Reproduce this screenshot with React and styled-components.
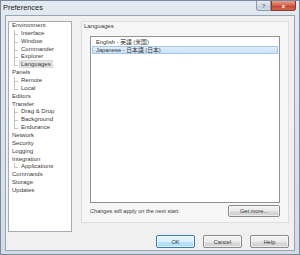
import React from 'react';
import styled, { createGlobalStyle } from 'styled-components';

const Global = createGlobalStyle`
  html, body { margin: 0; padding: 0; }
  body {
    width: 300px;
    height: 255px;
    overflow: hidden;
    background: #fff;
    font-family: "Liberation Sans", Arial, "Noto Sans CJK JP", sans-serif;
  }
`

const TREE = [
  { label: "Environment" },
  { label: "Interface", level: 1 },
  { label: "Window", level: 1 },
  { label: "Commander", level: 1 },
  { label: "Explorer", level: 1 },
  { label: "Languages", level: 1, last: true, selected: true },
  { label: "Panels" },
  { label: "Remote", level: 1 },
  { label: "Local", level: 1, last: true },
  { label: "Editors" },
  { label: "Transfer" },
  { label: "Drag & Drop", level: 1 },
  { label: "Background", level: 1 },
  { label: "Endurance", level: 1, last: true },
  { label: "Network" },
  { label: "Security" },
  { label: "Logging" },
  { label: "Integration" },
  { label: "Applications", level: 1, last: true },
  { label: "Commands" },
  { label: "Storage" },
  { label: "Updates" }
]

const LANGS = [
  { label: "English - 英語 (米国)" },
  { label: "Japanese - 日本語 (日本)", selected: true }
]

const Window = styled.div`
    width: 300px;
    height: 255px;
    box-sizing: border-box;
    border: 1px solid #7b8a9b;
    background: linear-gradient(#e3e9f0, #d3dce6);
    display: flex;
    flex-direction: column;
`

const TitleBar = styled.div`
    height: 14px;
    display: flex;
    align-items: flex-start;
    justify-content: space-between;
`

const Title = styled.div`
    font-size: 7.4px;
    color: #222;
    padding: 3px 0 0 2px;
    line-height: 8px;
`

const Caption = styled.div`
    display: flex;
    margin-right: 3px;
`

const CaptionButton = styled.div`
    width: ${p => p.$wide ? 25 : 15}px;
    height: 10px;
    box-sizing: border-box;
    display: flex;
    align-items: center;
    justify-content: center;
    font-size: 6px;
    font-weight: bold;
    color: ${p => p.$close ? '#fff' : '#6e7c8c'};
    border: 1px solid ${p => p.$close ? '#8c3a2b' : '#8d9aab'};
    border-top: none;
    border-radius: ${p => p.$close ? '0 0 3px 0' : '0 0 0 3px'};
    background: ${p => p.$close
      ? 'linear-gradient(#e4a08f, #d5604a 50%, #c5412a 51%, #d06a4f)'
      : 'linear-gradient(#e6ebf1, #d2dbe5 50%, #c2cedb 51%, #d4dde7)'};
`

const Client = styled.div`
    flex: 1;
    margin: 0 4px 3px 4px;
    border: 1px solid #97a5b5;
    background: #f0f0f0;
    display: flex;
    flex-direction: column;
    padding: 5px 5px 2px 2px;
    min-height: 0;
`

const Body = styled.div`
    display: flex;
    gap: 9px;
    align-items: flex-start;
`

const Tree = styled.div`
    width: 64px;
    height: 211px;
    box-sizing: border-box;
    border: 1px solid #a5acb5;
    background: #fff;
`

const TreeRow = styled.div`
    position: relative;
    height: 7.86px;
    line-height: 7.86px;
    font-size: 6px;
    color: #3a3a3a;
    padding-left: ${p => p.$level ? 11 : 2}px;
    white-space: nowrap;

    ${p => p.$level ? `
      &::before {
        content: "";
        position: absolute;
        left: 5px;
        top: 0;
        height: ${p.$last ? '50%' : '100%'};
        border-left: 1px solid #c4c4c4;
      }
      &::after {
        content: "";
        position: absolute;
        left: 5px;
        top: 50%;
        width: 4px;
        border-top: 1px solid #c4c4c4;
      }
    ` : ''}
`

const TreeLabel = styled.span`
    padding: 0 1px;
    background: ${p => p.$selected ? '#e4e4e4' : 'transparent'};
    outline: ${p => p.$selected ? '1px solid #dadada' : 'none'};
`

const Page = styled.div`
    width: 208px;
    height: 202px;
    box-sizing: border-box;
    border: 1px solid #dedede;
    background: #f6f6f6;
    display: flex;
    flex-direction: column;
    padding: 1px 8px 5px 2px;
`

const Heading = styled.div`
    font-size: 6px;
    line-height: 7px;
    color: #3a3a3a;
    height: 7px;
`

const ListBox = styled.div`
    flex: 1;
    margin: 6px 0 0 6px;
    border: 1px solid #8e949c;
    background: #fff;
    padding-top: 1px;
`

const ListItem = styled.div`
    height: 8px;
    line-height: 8px;
    font-size: 5.8px;
    color: #333;
    padding-left: 3px;
    margin: 0 1px;
    box-sizing: border-box;
    border: 1px solid ${p => p.$selected ? '#a9c7e8' : 'transparent'};
    background: ${p => p.$selected ? 'linear-gradient(#dfedfc, #cde2fa)' : 'transparent'};
    display: flex;
    align-items: center;
`

const Footer = styled.div`
    display: flex;
    align-items: center;
    justify-content: space-between;
    margin: 2px 0 0 6px;
    height: 12px;
`

const Note = styled.div`
    font-size: 5.6px;
    color: #3a3a3a;
`

const Button = styled.div`
    width: ${p => p.$width || 39}px;
    height: ${p => p.$height || 13}px;
    box-sizing: border-box;
    display: flex;
    align-items: center;
    justify-content: center;
    font-size: 5.6px;
    color: #333;
    border-radius: 2px;
    border: 1px solid ${p => p.$primary ? '#3d7bad' : '#8a8a8a'};
    background: ${p => p.$primary
      ? 'linear-gradient(#eaf6fd, #d9f0fc 50%, #bee6fd 51%, #a7d9f5)'
      : 'linear-gradient(#f2f2f2, #ebebeb 50%, #dddddd 51%, #cfcfcf)'};
    box-shadow: inset 0 0 0 1px rgba(255,255,255,0.6);
`

const Actions = styled.div`
    margin-top: auto;
    display: flex;
    justify-content: flex-end;
    gap: 8px;
`

const App = () => {
  return (
    <>
      <Global />
      <Window>
        <TitleBar>
          <Title>Preferences</Title>
          <Caption>
            <CaptionButton>?</CaptionButton>
            <CaptionButton $wide $close>x</CaptionButton>
          </Caption>
        </TitleBar>
        <Client>
          <Body>
            <Tree>
              {TREE.map(item => (
                <TreeRow key={item.label} $level={item.level} $last={item.last}>
                  <TreeLabel $selected={item.selected}>{item.label}</TreeLabel>
                </TreeRow>
              ))}
            </Tree>
            <Page>
              <Heading>Languages</Heading>
              <ListBox>
                {LANGS.map(lang => (
                  <ListItem key={lang.label} $selected={lang.selected}>{lang.label}</ListItem>
                ))}
              </ListBox>
              <Footer>
                <Note>Changes will apply on the next start.</Note>
                <Button $width={52} $height={12}>Get more...</Button>
              </Footer>
            </Page>
          </Body>
          <Actions>
            <Button $primary>OK</Button>
            <Button>Cancel</Button>
            <Button>Help</Button>
          </Actions>
        </Client>
      </Window>
    </>
  )
}

export default App
